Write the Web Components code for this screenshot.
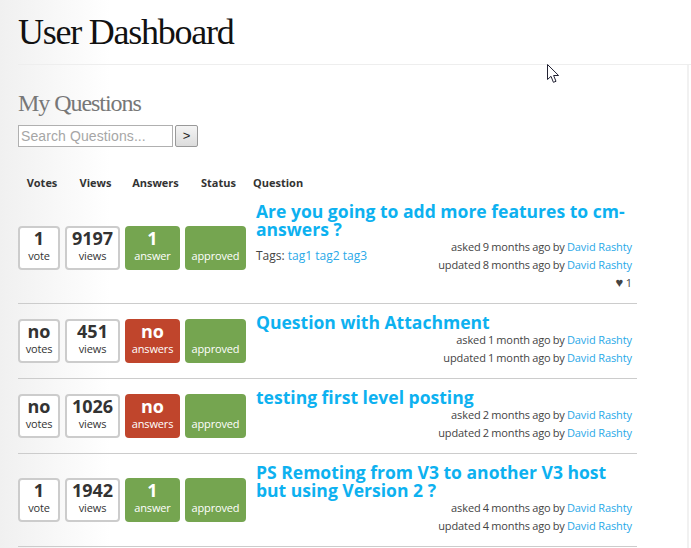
<!DOCTYPE html>
<html>
<head>
<meta charset="utf-8">
<title>User Dashboard</title>
<style>
  html, body { margin: 0; height: 100%; }
  body {
    background: linear-gradient(to right, #f0f0f0 0, #fff 110px) no-repeat;
    font-family: "Open Sans", "Noto Sans", sans-serif;
    overflow: hidden;
    position: relative;
  }
</style>
</head>
<body>
<ud-page>
  <ud-title slot="title">User Dashboard</ud-title>
  <ud-search></ud-search>
  <ud-head></ud-head>
  <ud-question votes="1" vote-label="vote" views="9197" answers="1" answer-label="answer" asked="asked 9 months ago" updated="updated 8 months ago" likes="1" tags="tag1,tag2,tag3" first>Are you going to add more features to cm-answers ?</ud-question>
  <ud-question votes="no" vote-label="votes" views="451" answers="no" answer-label="answers" asked="asked 1 month ago" updated="updated 1 month ago">Question with Attachment</ud-question>
  <ud-question votes="no" vote-label="votes" views="1026" answers="no" answer-label="answers" asked="asked 2 months ago" updated="updated 2 months ago">testing first level posting</ud-question>
  <ud-question votes="1" vote-label="vote" views="1942" answers="1" answer-label="answer" asked="asked 4 months ago" updated="updated 4 months ago">PS Remoting from V3 to another V3 host but using Version 2 ?</ud-question>
</ud-page>
<ud-cursor></ud-cursor>

<script>
const SERIF = '"Liberation Serif", "DejaVu Serif", serif';
const SANS = '"Open Sans", "Noto Sans", sans-serif';

class UdPage extends HTMLElement {
  constructor() {
    super();
    this.attachShadow({ mode: 'open' }).innerHTML = `
      <style>
        :host { display: block; }
        header { padding: 0 0 0 18px; }
        .bar { height: 64px; border-bottom: 1px solid #eee; }
        main { border-right: 2px solid #f1f1f1; padding: 21px 50px 0 18px; width: 619px; height: 600px; }
        h2 { margin: 0; font: 400 24px/34px ${SERIF}; color: #777; letter-spacing: -1.05px; height: 34px; }
      </style>
      <header><div class="bar"><slot name="title"></slot></div></header>
      <main>
        <h2>My Questions</h2>
        <slot></slot>
      </main>`;
  }
}

class UdTitle extends HTMLElement {
  constructor() {
    super();
    this.attachShadow({ mode: 'open' }).innerHTML = `
      <style>
        :host { display: block; font: 400 36px/64px ${SERIF}; color: #111; letter-spacing: -1.25px; }
      </style>
      <slot></slot>`;
  }
}

class UdSearch extends HTMLElement {
  constructor() {
    super();
    this.attachShadow({ mode: 'open' }).innerHTML = `
      <style>
        :host { display: flex; gap: 2px; height: 22px; margin-top: 5px; }
        .input {
          width: 151px; height: 20px; border: 1px solid #b0b0b0; background: #fff;
          color: #a6a6a6; font: 14px/20px "Liberation Sans", Arial, sans-serif;
          padding-left: 2px; letter-spacing: .1px;
        }
        .go {
          width: 21px; height: 20px; border: 1px solid #999; border-radius: 2px;
          background: linear-gradient(#f4f4f4, #dcdcdc);
          font: 13px/20px "Liberation Sans", Arial, sans-serif; color: #222; text-align: center;
        }
      </style>
      <div class="input">Search Questions...</div>
      <div class="go">&gt;</div>`;
  }
}

class UdHead extends HTMLElement {
  constructor() {
    super();
    const cols = [['Votes', 42], ['Views', 55], ['Answers', 55], ['Status', 61]];
    this.attachShadow({ mode: 'open' }).innerHTML = `
      <style>
        :host { display: flex; gap: 5px; height: 47px; padding: 27px 0 0 3px; box-sizing: border-box; font: 700 11px/18px ${SANS}; color: #333; }
        span { text-align: center; display: block; }
        .last { margin-left: -1px; }
      </style>
      ${cols.map(([t, w]) => `<span style="width:${w}px">${t}</span>`).join('')}
      <span class="last">Question</span>`;
  }
}

class UdStat extends HTMLElement {
  constructor() {
    super();
    this.attachShadow({ mode: 'open' }).innerHTML = `
      <style>
        :host { display: flex; flex-direction: column; align-items: center; box-sizing: border-box; height: 44px; border-radius: 4px; border: 2px solid #ccc; background: #fff; color: #333; flex: none; }
        :host([tone="good"]) { background: #75a550; border: 0; color: #fff; padding-top: 2px; }
        :host([tone="bad"]) { background: #c0452c; border: 0; color: #fff; padding-top: 2px; }
        b { font: 700 18px/19px ${SANS}; height: 19px; margin-top: 1px; }
        i { font: 400 11px/16px ${SANS}; letter-spacing: -.15px; }
      </style>
      <b></b><i></i>`;
  }
  connectedCallback() {
    this.shadowRoot.querySelector('b').textContent = this.getAttribute('value') || '';
    this.shadowRoot.querySelector('i').textContent = this.getAttribute('label') || '';
    this.style.width = this.getAttribute('width') + 'px';
  }
}

class UdQuestion extends HTMLElement {
  constructor() {
    super();
    this.attachShadow({ mode: 'open' });
  }
  connectedCallback() {
    const a = n => this.getAttribute(n);
    const user = '<a>David Rashty</a>';
    const tags = a('tags');
    const isAnswered = a('answers') !== 'no';
    this.shadowRoot.innerHTML = `
      <style>
        :host { display: flex; align-items: center; gap: 5px; border-bottom: 1px solid #ccc; font: 400 11px/18px ${SANS}; color: #444; }
        :host([first]) ud-stat { margin-bottom: 1px; }
        .q { flex: 1; margin-left: 5px; min-width: 0; padding: 9px 0 11px; }
        h3 { margin: 0; font: 700 17.55px/18px ${SANS}; color: #0db1f0; }
        :host([first]) h3 { margin-top: -1px; }
        a { color: #2aa9e8; word-spacing: 0; }
        .meta { display: flex; justify-content: space-between; padding-right: 5px; }
        .tags { margin-top: 9px; font-size: 12px; }
        .when { text-align: right; margin-left: auto; letter-spacing: -.1px; word-spacing: -.6px; }
        .likes { word-spacing: 0; height: 18px; }
        .likes span { font-size: 13px; line-height: 1; }
      </style>
      <ud-stat width="42" value="${a('votes')}" label="${a('vote-label')}"></ud-stat>
      <ud-stat width="55" value="${a('views')}" label="views"></ud-stat>
      <ud-stat width="55" tone="${isAnswered ? 'good' : 'bad'}" value="${a('answers')}" label="${a('answer-label')}"></ud-stat>
      <ud-stat width="61" tone="good" value="&nbsp;" label="approved"></ud-stat>
      <div class="q">
        <h3><slot></slot></h3>
        <div class="meta">
          ${tags ? `<div class="tags">Tags: ${tags.split(',').map(t => `<a>${t}</a>`).join(' ')}</div>` : ''}
          <div class="when">
            <div>${a('asked')} by ${user}</div>
            <div>${a('updated')} by ${user}</div>
            ${a('likes') ? `<div class="likes"><span>&#9829;</span> ${a('likes')}</div>` : ''}
          </div>
        </div>
      </div>`;
  }
}

class UdCursor extends HTMLElement {
  constructor() {
    super();
    this.attachShadow({ mode: 'open' }).innerHTML = `
      <style>:host { position: absolute; left: 547px; top: 64px; width: 13px; height: 20px; display: block; }</style>
      <svg width="13" height="20" viewBox="0 0 13 20"><path d="M.5.5v15l3.5-3.2 2.4 6 2.6-1-2.4-5.8h5z" fill="#fff" stroke="#223" stroke-width="1"/></svg>`;
  }
}

customElements.define('ud-page', UdPage);
customElements.define('ud-title', UdTitle);
customElements.define('ud-search', UdSearch);
customElements.define('ud-head', UdHead);
customElements.define('ud-stat', UdStat);
customElements.define('ud-question', UdQuestion);
customElements.define('ud-cursor', UdCursor);
</script>
</body>
</html>
